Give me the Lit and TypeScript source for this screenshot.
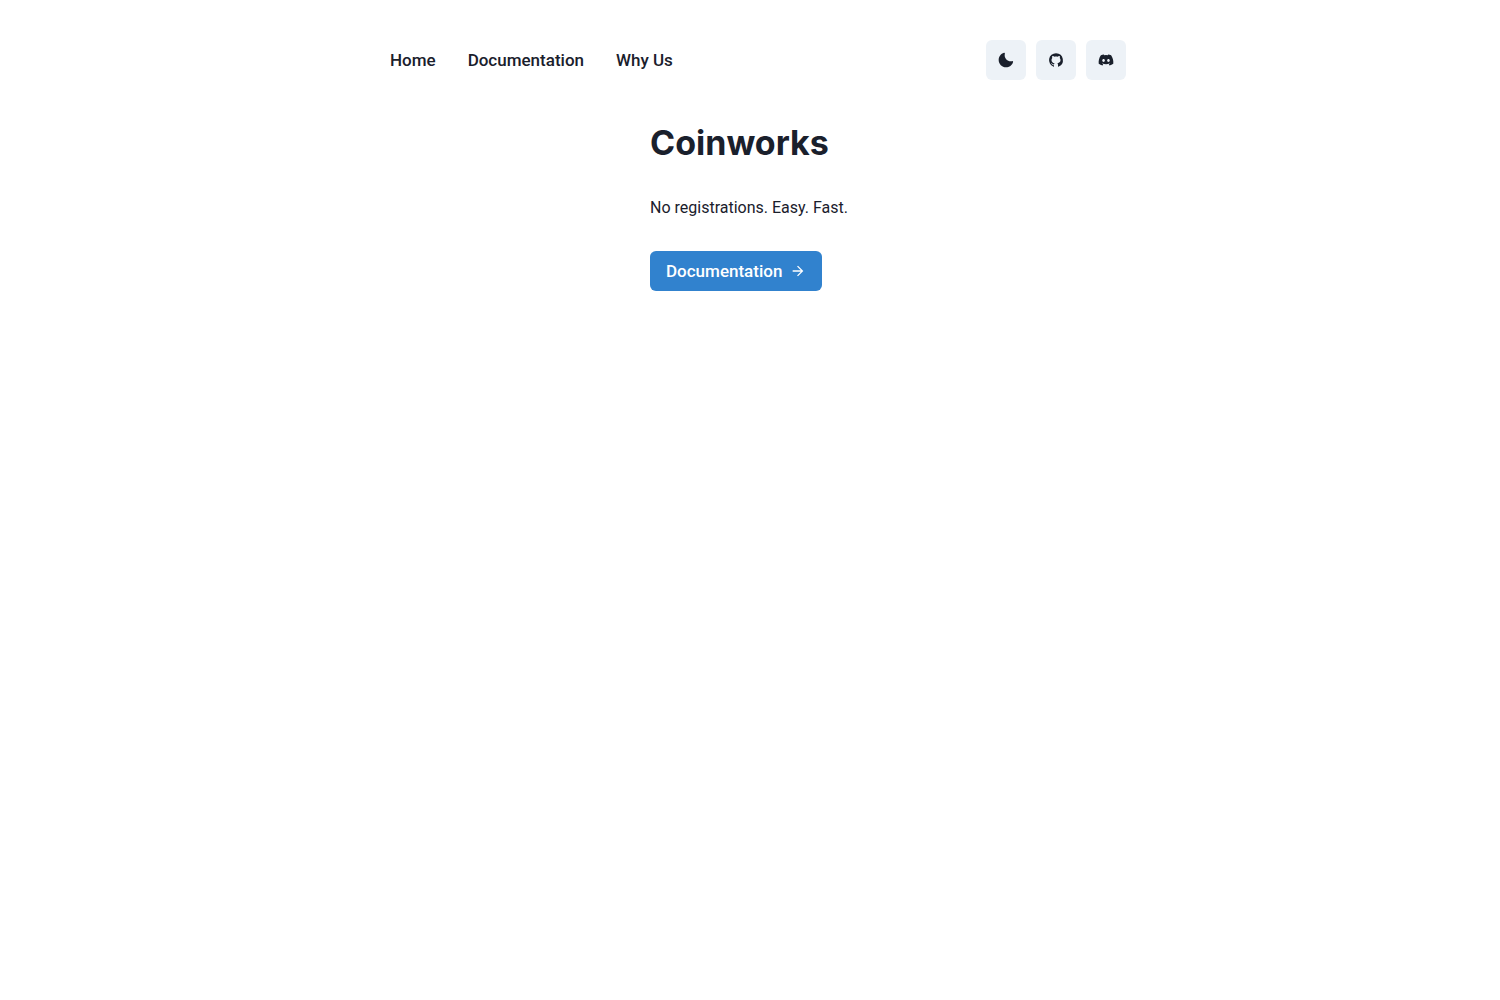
import { LitElement, html, css, svg } from "lit";
import { customElement } from "lit/decorators.js";

const moon = svg`<path d="M21.4,13.7C20.6,13.9,19.8,14,19,14c-5,0-9-4-9-9c0-0.8,0.1-1.6,0.3-2.4c0.1-0.3,0-0.7-0.3-1c-0.3-0.3-0.6-0.4-1-0.3C4.3,2.7,1,7.1,1,12c0,6.1,4.9,11,11,11c4.9,0,9.3-3.3,10.6-8.1c0.1-0.3,0-0.7-0.3-1C22.1,13.7,21.7,13.6,21.4,13.7z"/>`;
const github = svg`<path d="M8 1.2a7 7 0 0 0-2.3 13.6c.35.1.3-.15.3-.35v-1.2c-2.1.25-2.2-1.15-2.35-1.4-.28-.5-.96-.62-.76-.86.48-.25.98.06 1.54.9.41.61 1.22.51 1.63.41.09-.37.28-.7.54-.95C4.4 10.95 3.5 9.6 3.5 8c0-.77.25-1.48.75-2.06-.32-.95.03-1.75.08-1.88.9-.08 1.85.65 1.92.71.52-.14 1.1-.21 1.77-.21s1.25.07 1.77.21c.18-.13 1.05-.76 1.9-.69.04.12.38.91.08 1.85.5.57.77 1.29.77 2.07 0 1.6-.93 2.94-3.13 3.33.38.36.6.87.6 1.42v1.76c0 .14 0 .28.24.28A7 7 0 0 0 8 1.2z"/>`;
const discord = svg`<path d="M524.531 69.836a1.5 1.5 0 0 0-.764-.7A485.065 485.065 0 0 0 404.081 32.03a1.816 1.816 0 0 0-1.923.91 337.461 337.461 0 0 0-14.9 30.6 447.848 447.848 0 0 0-134.426 0 309.541 309.541 0 0 0-15.135-30.6 1.89 1.89 0 0 0-1.924-.91 483.689 483.689 0 0 0-119.688 37.107 1.712 1.712 0 0 0-.788.676C39.068 183.651 18.186 294.69 28.43 404.354a2.016 2.016 0 0 0 .765 1.375 487.666 487.666 0 0 0 146.825 74.189 1.9 1.9 0 0 0 2.063-.676A348.2 348.2 0 0 0 208.12 430.4a1.86 1.86 0 0 0-1.019-2.588 321.173 321.173 0 0 1-45.868-21.853 1.885 1.885 0 0 1-.185-3.126 251.047 251.047 0 0 0 9.109-7.137 1.819 1.819 0 0 1 1.9-.256c96.229 43.917 200.41 43.917 295.5 0a1.812 1.812 0 0 1 1.924.233 234.533 234.533 0 0 0 9.132 7.16 1.884 1.884 0 0 1-.162 3.126 301.407 301.407 0 0 1-45.89 21.83 1.875 1.875 0 0 0-1 2.611 391.055 391.055 0 0 0 30.014 48.815 1.864 1.864 0 0 0 2.063.7A486.048 486.048 0 0 0 610.7 405.729a1.882 1.882 0 0 0 .765-1.352c12.264-126.783-20.532-236.912-86.934-334.541zM222.491 337.58c-28.972 0-52.844-26.587-52.844-59.239s23.409-59.241 52.844-59.241c29.665 0 53.306 26.82 52.843 59.239 0 32.654-23.41 59.241-52.843 59.241zm195.38 0c-28.971 0-52.843-26.587-52.843-59.239s23.409-59.241 52.843-59.241c29.667 0 53.307 26.82 52.844 59.239 0 32.654-23.177 59.241-52.844 59.241z"/>`;

@customElement("app-root")
export class AppRoot extends LitElement {
  static styles = css`
    :host {
      display: block;
      color: #1a202c;
      font: 400 16px/24px Roboto, "Liberation Sans", sans-serif;
    }
    * { box-sizing: border-box; }
    a { color: inherit; text-decoration: none; }
    .header {
      display: flex;
      align-items: center;
      justify-content: space-between;
      max-width: 752px;
      margin: 0 auto;
      padding-top: 40px;
    }
    .links, .actions { display: flex; }
    .actions { gap: 10px; }
    .link, .cta {
      display: inline-flex;
      align-items: center;
      height: 40px;
      padding: 0 16px;
      border-radius: 6px;
      font-size: 17px;
      font-weight: 500;
    }
    .icon-button {
      display: flex;
      align-items: center;
      justify-content: center;
      width: 40px;
      height: 40px;
      padding: 0;
      border: 0;
      border-radius: 6px;
      background: #edf2f7;
      color: inherit;
      cursor: pointer;
    }
    .icon { width: 16px; height: 16px; fill: currentColor; }
    .hero {
      display: flex;
      flex-direction: column;
      align-items: flex-start;
      width: fit-content;
      min-width: 200px;
      margin: 0 auto;
      padding-top: 40px;
    }
    .title {
      margin: 0;
      font: 700 34px/46px Inter, "Liberation Sans", sans-serif;
    }
    .lead { margin: 30px 0 31px; }
    .cta { gap: 8px; background: #3182ce; color: #fff; }
  `;

  render() {
    return html`
      <header class="header">
        <nav class="links" aria-label="Main">
          <a class="link" href="#home">Home</a>
          <a class="link" href="#docs">Documentation</a>
          <a class="link" href="#why">Why Us</a>
        </nav>
        <div class="actions">
          <button class="icon-button" type="button" aria-label="Toggle dark mode">
            <svg class="icon" viewBox="0 0 24 24" aria-hidden="true">${moon}</svg>
          </button>
          <a class="icon-button" href="#github" aria-label="GitHub">
            <svg class="icon" viewBox="0 0 16 16" aria-hidden="true">${github}</svg>
          </a>
          <a class="icon-button" href="#discord" aria-label="Discord">
            <svg class="icon" viewBox="0 0 640 512" aria-hidden="true">${discord}</svg>
          </a>
        </div>
      </header>
      <main class="hero">
        <h1 class="title">Coinworks</h1>
        <p class="lead">No registrations. Easy. Fast.</p>
        <a class="cta" href="#docs">
          Documentation
          <svg class="icon" viewBox="0 0 24 24" aria-hidden="true"><path d="M12 4l-1.41 1.41L16.17 11H4v2h12.17l-5.58 5.59L12 20l8-8z"/></svg>
        </a>
      </main>
    `;
  }
}
